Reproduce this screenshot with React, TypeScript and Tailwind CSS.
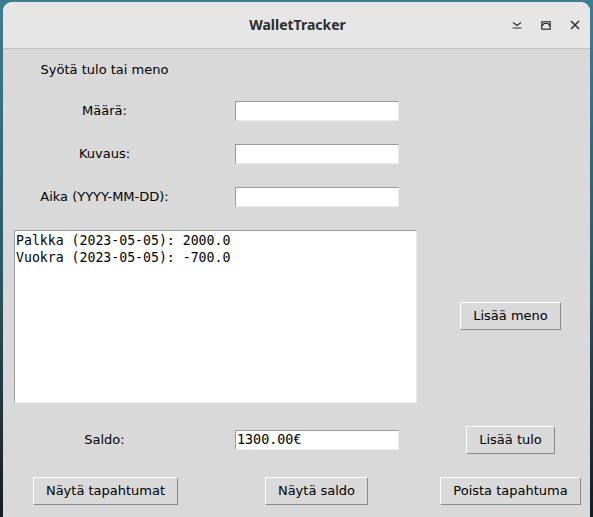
import React from 'react';

const sans = { fontFamily: '"DejaVu Sans", sans-serif' };
const mono = { fontFamily: '"DejaVu Sans Mono", monospace' };

const TkButton: React.FC<{ label: string; className?: string }> = ({ label, className = '' }) => (
  <button
    className={`h-[28px] flex items-center justify-center bg-[#d9d9d9] border border-t-white border-l-white border-b-[#8a8a8a] border-r-[#8a8a8a] text-[13px] text-black ${className}`}
  >
    {label}
  </button>
);

const TkEntry: React.FC<{ value?: string }> = ({ value }) => (
  <div className="w-[164px] h-[20px] bg-white border border-t-[#9a9a9a] border-l-[#9a9a9a] border-b-[#ececec] border-r-[#ececec] flex items-center pl-[1px]">
    {value && (
      <span className="text-[13.4px] text-black leading-none" style={mono}>
        {value}
      </span>
    )}
  </div>
);

const transactions = ['Palkka (2023-05-05): 2000.0', 'Vuokra (2023-05-05): -700.0'];

export default function App() {
  return (
    <div className="w-[593px] h-[517px] overflow-hidden bg-gradient-to-b from-[#3d7d92] via-[#2c5a68] to-[#161c20]">
      <div className="ml-[3px] mt-[2px] w-[587px] h-[515px] rounded-t-[9px] overflow-hidden bg-[#d9d9d9] flex flex-col" style={sans}>
        {/* title bar */}
        <div className="h-[47px] shrink-0 bg-[#e6e6e7] border-b border-[#c2c2c2] flex items-center relative">
          <div
            className="flex-1 text-center text-[14px] font-bold text-[#2d2d2d] pl-[2px] pb-[1px]"
            style={{ fontFamily: '"Noto Sans", sans-serif' }}
          >
            WalletTracker
          </div>
          <div className="absolute right-[10px] top-[18px] flex items-center gap-[19px] text-[#2e2e2e]">
            <svg width="10" height="8" viewBox="0 0 10 8" fill="none" stroke="currentColor" strokeWidth="1.2">
              <path d="M1 1.5 L5 4.5 L9 1.5" />
              <path d="M0.5 7 H9.5" />
            </svg>
            <svg width="10" height="9" viewBox="0 0 10 9" fill="none" stroke="currentColor" strokeWidth="1.2">
              <rect x="0.8" y="0.8" width="8.4" height="7.4" />
              <path d="M0.8 5 L3 2.5 H7 L9.2 5" />
            </svg>
            <svg width="10" height="10" viewBox="0 0 10 10" fill="none" stroke="currentColor" strokeWidth="1.5">
              <path d="M1 1 L9 9 M9 1 L1 9" />
            </svg>
          </div>
        </div>

        {/* body */}
        <div className="flex flex-col pl-[11px] text-[13px] text-black">
          <div className="h-[42px] flex items-center">
            <div className="w-[181px] text-center">Syötä tulo tai meno</div>
          </div>
          <div className="h-[40px] flex items-center">
            <div className="w-[181px] text-center">Määrä:</div>
            <div className="ml-[40px]">
              <TkEntry />
            </div>
          </div>
          <div className="h-[46px] flex items-center">
            <div className="w-[181px] text-center">Kuvaus:</div>
            <div className="ml-[40px]">
              <TkEntry />
            </div>
          </div>
          <div className="h-[40px] flex items-center">
            <div className="w-[181px] text-center">Aika (YYYY-MM-DD):</div>
            <div className="ml-[40px]">
              <TkEntry />
            </div>
          </div>

          <div className="mt-[13px] flex items-center">
            <div className="w-[403px] h-[173px] bg-white border border-t-[#9a9a9a] border-l-[#9a9a9a] border-b-[#ececec] border-r-[#ececec] pl-[1px] pt-[1px]">
              {transactions.map((t) => (
                <div key={t} className="h-[17px] leading-[17px] text-[13.2px] whitespace-pre" style={mono}>
                  {t}
                </div>
              ))}
            </div>
            <TkButton label="Lisää meno" className="ml-[43px] w-[101px] mt-[-1px]" />
          </div>

          <div className="mt-[17px] h-[40px] flex items-center">
            <div className="w-[181px] text-center">Saldo:</div>
            <div className="ml-[40px]">
              <TkEntry value="1300.00€" />
            </div>
            <TkButton label="Lisää tulo" className="ml-[67px] w-[89px]" />
          </div>

          <div className="mt-[17px] flex items-center">
            <TkButton label="Näytä tapahtumat" className="ml-[19px] w-[145px]" />
            <TkButton label="Näytä saldo" className="ml-[87px] w-[103px]" />
            <TkButton label="Poista tapahtuma" className="ml-[72px] w-[141px]" />
          </div>
        </div>
      </div>
    </div>
  );
}
